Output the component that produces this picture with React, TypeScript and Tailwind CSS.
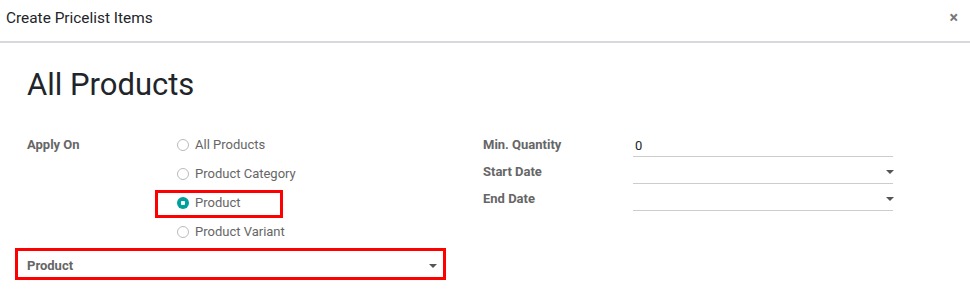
import React from 'react'

const options = ['All Products', 'Product Category', 'Product', 'Product Variant']

function Caret() {
  return <span className="inline-block w-0 h-0 border-l-[4px] border-r-[4px] border-t-[4px] border-l-transparent border-r-transparent border-t-[#555]" />
}

function Radio({ label, checked }: { label: string; checked?: boolean }) {
  return (
    <div className="relative flex items-center h-[29px]">
      {checked && (
        <div className="absolute left-[-22px] top-[2px] w-[128px] h-[28px] border-[3px] border-[#ff0000]" />
      )}
      {checked ? (
        <span className="w-[12px] h-[12px] rounded-full bg-[#00a09d] flex items-center justify-center">
          <span className="w-[4px] h-[4px] bg-white rounded-[1px]" />
        </span>
      ) : (
        <span className="w-[12px] h-[12px] rounded-full border border-[#bbb] bg-white" />
      )}
      <span className="ml-[6px] text-[13px] text-[#666]">{label}</span>
    </div>
  )
}

function Field({ label, value, caret }: { label: string; value?: string; caret?: boolean }) {
  return (
    <div className="flex items-start h-[27px]">
      <div className="w-[150px] h-[23px] flex items-center text-[13px] font-bold text-[#666] -mt-[1px]">{label}</div>
      <div className="w-[260px] h-[23px] border-b border-[#ccc] flex items-center justify-between">
        <span className="pl-[2px] text-[13px] text-[#212529] mt-[1px]">{value}</span>
        {caret && <span className="flex -mr-[1px]"><Caret /></span>}
      </div>
    </div>
  )
}

export default function App() {
  return (
    <div className="w-[970px] h-[308px] bg-white" style={{ fontFamily: 'Roboto, sans-serif' }}>
      <div className="h-[43px] border-b-2 border-[#d6d8dd] flex items-start justify-between pt-[7px] pl-[6px] pr-[12px]">
        <span className="text-[15.4px] text-[#212529]">Create Pricelist Items</span>
        <span className="text-[16px] font-bold text-[#777] leading-none mt-[3px]">×</span>
      </div>
      <div className="px-[27px] pt-[22px]">
        <h1 className="text-[31px] leading-[40px] text-[#212529]">All Products</h1>
        <div className="flex mt-[26px]">
          <div className="w-[456px]">
            <div className="flex">
              <div className="w-[150px] pt-[4px] text-[13px] font-bold text-[#666]">Apply On</div>
              <div className="-mt-[1px]">
                {options.map((o) => (
                  <Radio key={o} label={o} checked={o === 'Product'} />
                ))}
              </div>
            </div>
            <div className="relative flex items-center justify-between h-[32px] -ml-[12px] w-[431px] mt-[2px] pt-[3px] pl-[12px] pr-[6px] border-[3px] border-[#ff0000]">
              <span className="text-[13px] font-bold text-[#666] -ml-[3px]">Product</span>
              <Caret />
            </div>
          </div>
          <div className="mt-[3px]">
            <Field label="Min. Quantity" value="0" />
            <Field label="Start Date" caret />
            <Field label="End Date" caret />
          </div>
        </div>
      </div>
    </div>
  )
}
